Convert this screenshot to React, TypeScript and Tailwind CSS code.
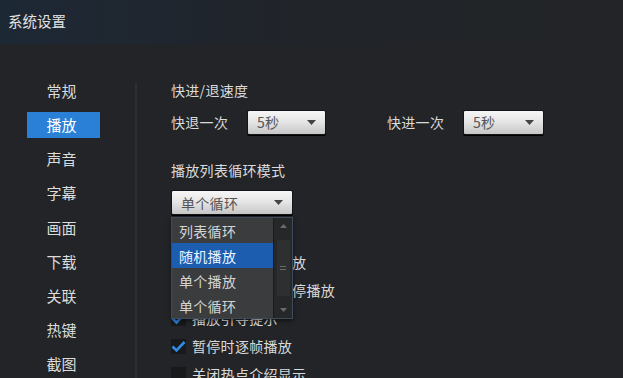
import React from "react";

const FONT = '"Noto Sans CJK SC", "Noto Sans", sans-serif';

function Caret() {
  return (
    <svg width="9" height="5" viewBox="0 0 9 5">
      <path d="M0 0H9L4.5 5Z" fill="#444" />
    </svg>
  );
}

function Select({ value, className }: { value: string; className: string }) {
  return (
    <div
      className={
        "h-[25px] rounded-[2px] border border-[#141518] bg-gradient-to-b from-[#f6f6f6] via-[#e4e4e4] to-[#c6c6c6] flex items-center justify-between pl-[9px] pr-[9px] text-[#555] text-[14px] shadow-[0_1px_0_#000] " +
        className
      }
    >
      <span>{value}</span>
      <Caret />
    </div>
  );
}

function Check({ checked }: { checked: boolean }) {
  return (
    <div className="w-[15px] h-[15px] relative bg-[#18191b] flex items-center justify-center">
      {checked && (
        <svg width="15" height="13" viewBox="0 0 15 13" className="absolute left-0 top-[1px]">
          <path d="M1.5 6.5 L5.5 10.5 L13.5 2" stroke="#2f8be6" strokeWidth="2.6" fill="none" />
        </svg>
      )}
    </div>
  );
}

const navItems = ["常规", "播放", "声音", "字幕", "画面", "下载", "关联", "热键", "截图"];

const checkRows = [
  { text: "打开文件自动播放", checked: true },
  { text: "最小化时自动暂停播放", checked: true },
  { text: "播放引导提示", checked: true },
  { text: "暂停时逐帧播放", checked: true },
  { text: "关闭热点介绍显示", checked: false },
];

const listItems = ["列表循环", "随机播放", "单个播放", "单个循环"];

export default function App() {
  return (
    <div
      className="w-[623px] h-[378px] overflow-hidden bg-[#222427] text-[#dadada] flex flex-col"
      style={{ fontFamily: FONT }}
    >
      <div className="h-[44px] shrink-0 bg-gradient-to-r from-[#1d2835] via-[#212429] to-[#222427] pl-[8px] pt-[11px] text-[14.5px] leading-[20px] text-[#e2e2e2]">
        系统设置
      </div>
      <div className="flex flex-1">
        <div className="w-[135px] shrink-0 pt-[30px] pl-[27px]">
          {navItems.map((n) => (
            <div key={n} className="h-[34.2px] flex items-center">
              <div
                className={
                  "w-[73px] h-[26px] flex items-center justify-center pr-[4px] text-[15px] " +
                  (n === "播放" ? "bg-[#2a7fd6] text-white" : "text-[#dcdcdc]")
                }
              >
                {n}
              </div>
            </div>
          ))}
        </div>
        <div className="w-[2px] shrink-0 mt-[39px] bg-[#2c2f34]" />
        <div className="flex-1 pl-[34px] pt-[36px] text-[14px] leading-[20px] tracking-[0.3px]">
          <div>快进/退速度</div>
          <div className="mt-[9px] flex items-center h-[26px]">
            <span className="w-[76px]">快退一次</span>
            <Select value="5秒" className="w-[79px]" />
            <span className="ml-[61px] w-[76px]">快进一次</span>
            <Select value="5秒" className="w-[81px]" />
          </div>
          <div className="mt-[25px]">播放列表循环模式</div>
          <div className="mt-[10px] relative w-[122px]">
            <Select value="单个循环" className="w-[122px]" />
            <div className="absolute left-0 top-[27px] w-[122px] h-[102px] border border-[#3f4a5a] bg-[#3b3c3e] flex z-10 shadow-[0_2px_4px_rgba(0,0,0,0.5)]">
              <div className="flex-1 flex flex-col">
                {listItems.map((t) => (
                  <div
                    key={t}
                    className={
                      "h-[25px] flex items-center pl-[7px] " +
                      (t === "随机播放" ? "bg-[#1d5db0] text-[#eef4ff]" : "text-[#d4d4d4]")
                    }
                  >
                    {t}
                  </div>
                ))}
              </div>
              <div className="w-[19px] bg-[#262729] border-l border-[#1a1b1c] flex flex-col items-center justify-between py-[6px]">
                <svg width="7" height="4" viewBox="0 0 7 4">
                  <path d="M0 4H7L3.5 0Z" fill="#6a6a6a" />
                </svg>
                <div className="w-[13px] h-[56px] bg-[#2e2f31] flex flex-col items-center justify-center gap-[2px]">
                  <div className="w-[6px] h-[1px] bg-[#6a6a6a]" />
                  <div className="w-[6px] h-[1px] bg-[#6a6a6a]" />
                </div>
                <svg width="7" height="4" viewBox="0 0 7 4">
                  <path d="M0 0H7L3.5 4Z" fill="#6a6a6a" />
                </svg>
              </div>
            </div>
          </div>
          <div className="mt-[33px] flex flex-col">
            {checkRows.map((r) => (
              <div key={r.text} className="h-[28px] flex items-center gap-[6px]">
                <Check checked={r.checked} />
                <span>{r.text}</span>
              </div>
            ))}
          </div>
        </div>
      </div>
    </div>
  );
}
